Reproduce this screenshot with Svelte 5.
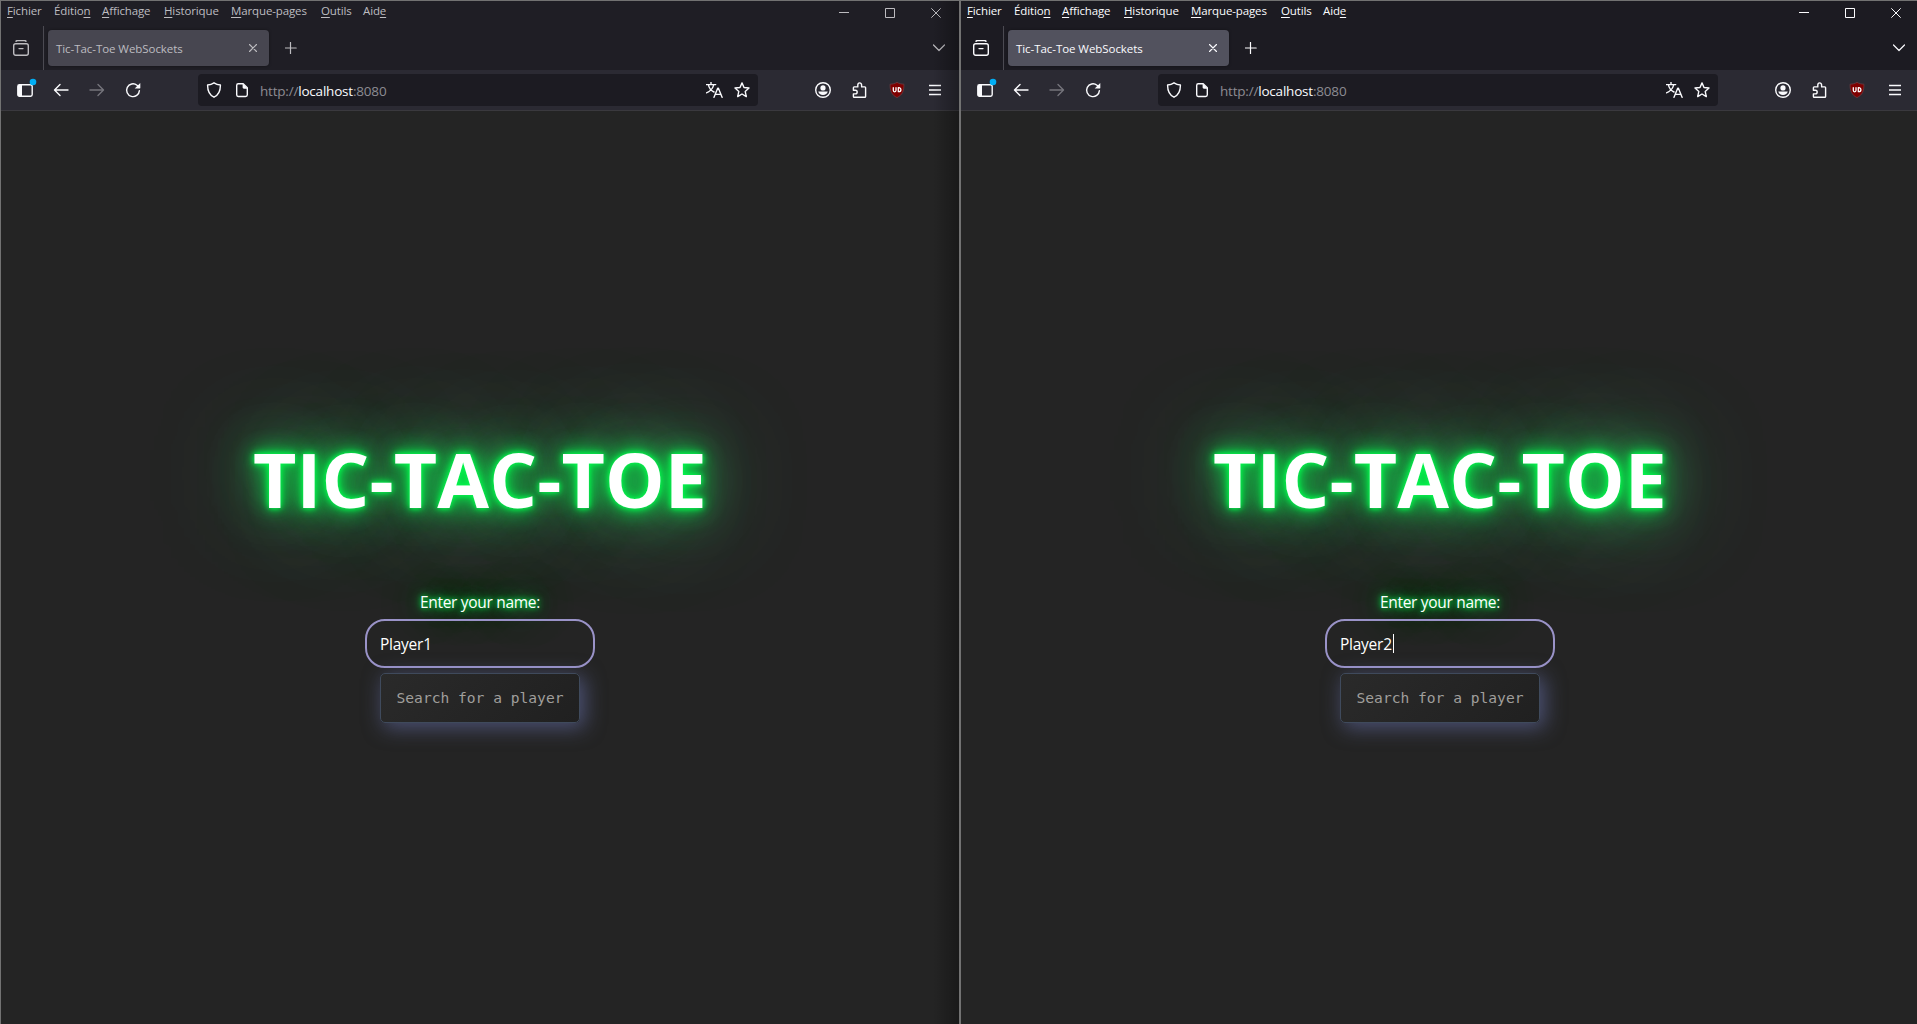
<script>
  const menus = [
    { pre: '', key: 'F', post: 'ichier', slot: 'm-fichier' },
    { pre: 'Éditio', key: 'n', post: '', slot: 'm-edition' },
    { pre: '', key: 'A', post: 'ffichage', slot: 'm-affichage' },
    { pre: '', key: 'H', post: 'istorique', slot: 'm-historique' },
    { pre: '', key: 'M', post: 'arque-pages', slot: 'm-marque' },
    { pre: '', key: 'O', post: 'utils', slot: 'm-outils' },
    { pre: 'Aid', key: 'e', post: '', slot: 'm-aide' }
  ];
  const windows = [
    { name: 'Player1', active: false },
    { name: 'Player2', active: true }
  ];
</script>

<main>
  {#each windows as win}
    <section class="window" class:active={win.active}>
      <header class="menubar">
        <nav>
          {#each menus as m}
            <span class={m.slot}>{m.pre}<u>{m.key}</u>{m.post}</span>
          {/each}
        </nav>
        <div class="controls">
          <svg width="10" height="10" viewBox="0 0 10 10"><path d="M0 4.5h10" /></svg>
          <svg width="10" height="10" viewBox="0 0 10 10"><path d="M.5.5h9v9h-9z" /></svg>
          <svg width="10" height="10" viewBox="0 0 10 10"><path d="M.3.3l9.4 9.4M9.7.3L.3 9.7" /></svg>
        </div>
      </header>

      <div class="tabs">
        <svg class="list" width="16" height="16" viewBox="0 0 16 16"><path d="M3 1.2C3.4.7 4 .6 4.6.6h6.8c.6 0 1.2.1 1.6.6" /><rect x=".7" y="3.7" width="14.6" height="11.6" rx="2" /><path d="M6 8.6h4" /></svg>
        <div class="rule"></div>
        <div class="tab">
          <span>Tic-Tac-Toe WebSockets</span>
          <svg width="8" height="8" viewBox="0 0 8 8"><path d="M.5.5l7 7M7.5.5l-7 7" /></svg>
        </div>
        <svg class="plus" width="12" height="12" viewBox="0 0 12 12"><path d="M5.500.3v11.4M0 6h11.200" /></svg>
        <svg class="chev" width="12" height="8" viewBox="0 0 12 8"><path d="M.5 1L6 6.5 11.5 1" /></svg>
      </div>

      <div class="toolbar">
        <svg class="side" width="20" height="20" viewBox="0 0 20 20"><rect x=".8" y="6.8" width="14.4" height="11.4" rx="1.6" /><path class="solid" d="M1 7h4v11H1z" /><circle cx="16" cy="4" r="3.300" /></svg>
        <svg class="back" width="16" height="16" viewBox="0 0 16 16"><path d="M15 8H1.7M7 2.5L1.5 8 7 13.5" /></svg>
        <svg class="fwd" width="16" height="16" viewBox="0 0 16 16"><path d="M1 8h13.3M9 2.5L14.5 8 9 13.5" /></svg>
        <svg class="reload" width="16" height="16" viewBox="0 0 16 16"><path d="M14.4 8.6A6.4 6.4 0 1 1 12 3.2l1.6 1.4" /><path class="solid" d="M15.3 1v5.1c0 .3-.2.5-.5.5H9.7z" /></svg>
        <div class="url">
          <svg width="16" height="16" viewBox="0 0 16 16"><path d="M8 .8c1.9 1.3 4 2 6.4 2.2.1 5.6-1.6 9.8-6.4 12.2C3.200 12.800 1.500 8.600 1.600 3 4 2.800 6.100 2.100 8 .8z" /></svg>
          <svg class="page" width="16" height="16" viewBox="0 0 16 16"><path d="M4.200 1.700h5l4.100 4.100v7c0 1-.7 1.700-1.700 1.700H4.200c-1 0-1.500-.7-1.500-1.700V3.400c0-1 .5-1.700 1.500-1.700z" /><path class="solid" d="M8.600 1.500l5.200 5.200H10c-.9 0-1.400-.5-1.400-1.400z" /></svg>
          <span class="address">http://<b>localhost</b>:8080</span>
          <svg class="translate" width="17" height="16" viewBox="0 0 17 16"><path d="M.3 2.600h9.400M5 .4v2M2.400 2.800C3.200 6.500 5.500 8.800 8 10M7.700 2.800C6.900 6.500 3.500 9.800.4 10.800" /><path d="M8 15.300l3.700-9h.7l3.700 9M9.300 12.400h5.500" /></svg>
          <svg class="star" width="16" height="16" viewBox="0 0 16 16"><path d="M8 .9l2 4.600 5 .5-3.800 3.400 1.100 5.200L8 12l-4.300 2.600 1.100-5.200L1 6l5-.5z" /></svg>
        </div>
        <svg class="account" width="16" height="16" viewBox="0 0 16 16"><circle cx="8" cy="8" r="7.300" /><circle class="solid" cx="8" cy="5.900" r="2.600" /><path class="solid" d="M3.300 9.600h9.400c-.4 2-2.200 3.400-4.700 3.400s-4.300-1.400-4.700-3.400z" /></svg>
        <svg class="puzzle" width="16" height="16" viewBox="0 0 16 16"><path d="M2.200 15.300h10.600c.5 0 .8-.3.800-.8V5.700c0-.5-.3-.8-.8-.8H9.600V3.100c0-3-3.800-3-3.800 0v1.800H2.200c-.5 0-.8.3-.8.8v2.500h2c2.400 0 2.400 3.700 0 3.700h-2v2.600c0 .5.3.8.8.8z" /></svg>
        <svg class="ublock" width="16" height="16" viewBox="0 0 16 16"><path d="M8 .4c2.200 1.200 4.400 1.700 6.900 1.800.1 7-1.300 10.500-6.900 13.400C2.400 12.700 1 9.200 1.100 2.200 3.600 2.100 5.800 1.600 8 .4z" /><path class="mark" d="M4.300 5.700v2.600c0 2 2.700 2 2.700 0V5.700M9.300 5.700v4h.5c2.800 0 2.800-4 0-4z" /></svg>
        <svg class="burger" width="12" height="12" viewBox="0 0 12 12"><path d="M0 1.500h12M0 6h12M0 10.500h12" /></svg>
      </div>

      <div class="game">
        <h1>TIC-TAC-TOE</h1>
        <label for={win.name}>Enter your name:</label>
        <div class="field" id={win.name}>
          <span>{win.name}</span>
          {#if win.active}<i class="caret"></i>{/if}
        </div>
        <button>Search for a player</button>
      </div>
      {#if !win.active}<div class="edge"></div>{/if}
    </section>
  {/each}
</main>

<style>
  :global(body) {
    overflow: hidden;
    background: #242424;
  }
  main {
    display: flex;
    width: 1920px;
    height: 1024px;
    overflow: hidden;
    font-family: 'Open Sans', 'Noto Sans', sans-serif;
  }
  .window {
    --ink: #bdbcc0;
    --strip: #1f1e25;
    --tab: #474650;
    position: relative;
    box-sizing: border-box;
    width: 960px;
    height: 1024px;
    overflow: hidden;
    border: 1px solid #727272;
    border-bottom: 0;
    background: #242424;
    display: flex;
    flex-direction: column;
  }
  .window.active {
    --ink: #fbfbfe;
    --strip: #1c1b22;
    --tab: #52525e;
  }
  svg {
    display: block;
    flex: none;
    fill: none;
    stroke: var(--ink);
    stroke-width: 1.2;
    stroke-linejoin: round;
    stroke-linecap: round;
  }
  .solid {
    fill: #fbfbfe;
    stroke: none;
  }
  .menubar {
    height: 25px;
    flex: none;
    background: var(--strip);
    display: flex;
    justify-content: space-between;
    color: var(--ink);
  }
  nav {
    display: flex;
    padding-left: 6px;
    font-size: 11.500px;
    line-height: 19px;
    white-space: nowrap;
    letter-spacing: -0.13px;
  }
  nav u {
    text-underline-offset: 2px;
    text-decoration-thickness: 1px;
    text-decoration-skip-ink: none;
  }
  .m-fichier { width: 47px; }
  .m-edition { width: 48px; }
  .m-affichage { width: 62px; }
  .m-historique { width: 67px; }
  .m-marque { width: 90px; }
  .m-outils { width: 42px; }
  .m-aide { width: 30px; }
  .controls {
    display: flex;
    gap: 36px;
    padding: 7px 18px 0 0;
  }
  .controls svg {
    stroke-width: 1;
    stroke-linecap: butt;
    stroke-linejoin: miter;
  }
  .tabs {
    height: 44px;
    flex: none;
    background: var(--strip);
    display: flex;
    align-items: center;
  }
  .list { margin: -1px 14px 0 12px; stroke-width: 1.400; }
  .rule { width: 1px; height: 44px; background: #4b4a52; }
  .tab {
    box-sizing: border-box;
    width: 221px;
    height: 36px;
    margin-left: 4px;
    padding: 0 12px 0 8px;
    border-radius: 4px;
    background: var(--tab);
    box-shadow: 0 0 3px rgba(0, 0, 0, 0.4);
    display: flex;
    align-items: center;
    justify-content: space-between;
    color: var(--ink);
    font-size: 11.500px;
    letter-spacing: -0.06px;
    white-space: nowrap;
  }
  .plus { margin-left: 16px; }
  .chev { margin: 0 14px 0 auto; }
  .toolbar {
    box-sizing: border-box;
    height: 41px;
    flex: none;
    border-bottom: 1px solid #3a393e;
    background: #2b2a33;
    display: flex;
    align-items: center;
  }
  .toolbar svg { stroke: #fbfbfe; stroke-width: 1.400; }
  .side { margin: -5px 0 0 16px; }
  .side circle { fill: #00aef5; stroke: none; }
  .back { margin-left: 16px; }
  .toolbar .fwd { margin-left: 20px; stroke: #75747b; }
  .reload { margin-left: 20px; }
  .url {
    box-sizing: border-box;
    width: 560px;
    height: 32px;
    margin-left: 57px;
    padding: 0 8px;
    border-radius: 4px;
    background: #1c1b22;
    display: flex;
    align-items: center;
  }
  .page { margin-left: 12px; }
  .address {
    margin-left: 10px;
    padding-top: 2px;
    color: #8d8c93;
    font-size: 13.500px;
    letter-spacing: -0.2px;
    line-height: 20px;
  }
  .address b {
    color: #fbfbfe;
    font-weight: 400;
  }
  .translate { margin-left: auto; }
  .star { margin-left: 11px; }
  .account { margin-left: 57px; }
  .puzzle { margin-left: 21px; }
  .ublock { margin-left: 21px; }
  .toolbar .ublock { fill: #800000; stroke: #6b3b40; stroke-width: 0.800; }
  .ublock .mark { fill: none; stroke: #fff; stroke-width: 1.300; }
  .burger { margin-left: 24px; }
  .toolbar .burger { stroke-linecap: butt; }
  .game {
    flex: 1;
    padding-top: 318px;
    display: flex;
    flex-direction: column;
    align-items: center;
    color: #fff;
  }
  h1,
  label {
    text-shadow:
      0 0 5px #03fa4d,
      0 0 10px #03fa4d,
      0 0 22px #03fa4d,
      0 0 50px #20e860,
      0 0 100px #50c878;
  }
  h1 {
    margin: 0;
    height: 100px;
    font-size: 75px;
    line-height: 100px;
    font-weight: 700;
    letter-spacing: 0.15px;
    white-space: nowrap;
  }
  label {
    margin-top: 61px;
    height: 24px;
    font-size: 15.500px;
    line-height: 25px;
    letter-spacing: -0.3px;
  }
  label {
    text-shadow:
      0 0 5px #03fa4d,
      0 0 10px rgba(3, 250, 77, 0.8),
      0 0 22px rgba(3, 250, 77, 0.6),
      0 0 50px #50c878;
  }
  .field {
    box-sizing: border-box;
    width: 230px;
    height: 49px;
    margin-top: 5px;
    padding: 0 13px;
    border: 2px solid #9a93c8;
    border-radius: 20px;
    display: flex;
    align-items: center;
    font-size: 15.500px;
    letter-spacing: -0.25px;
  }
  .caret {
    width: 1px;
    height: 19px;
    margin-left: 1px;
    background: #fff;
  }
  button {
    box-sizing: border-box;
    width: 200px;
    height: 50px;
    margin: 5px 0 0;
    padding: 0 0 2px;
    border: 1px solid #3f4a5c;
    border-radius: 5px;
    background: linear-gradient(135deg, #2a2a2a, #202020);
    box-shadow: 4px 4px 20px 1px rgba(108, 116, 180, 0.55);
    color: #a09f9c;
    font-family: 'DejaVu Sans Mono', monospace;
    font-size: 14.600px;
    white-space: nowrap;
  }
  .edge {
    position: absolute;
    top: 0;
    right: 0;
    bottom: 0;
    width: 26px;
    background: linear-gradient(to right, rgba(0, 0, 0, 0), rgba(0, 0, 0, 0.3));
  }
</style>
